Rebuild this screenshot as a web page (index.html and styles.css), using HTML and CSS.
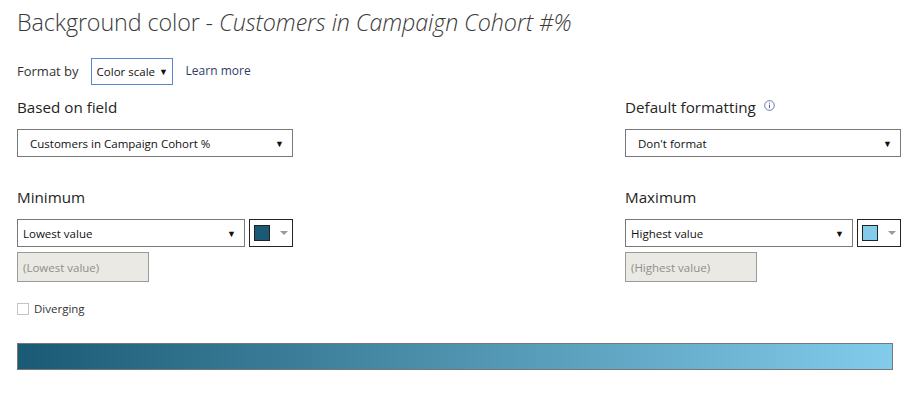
FILE: index.html
```html
<!DOCTYPE html>
<html>
<head>
<meta charset="utf-8">
<link rel="stylesheet" href="styles.css">
</head>
<body>
<div class="page">
  <h1 class="title">Background color - <em>Customers in Campaign Cohort #%</em></h1>

  <div class="format-row">
    <span class="format-label">Format by</span>
    <div class="format-select">Color scale <span class="tri">&#9660;</span></div>
    <span class="learn">Learn more</span>
  </div>

  <div class="grid">
    <div class="col">
      <div class="section-label">Based on field</div>
      <div class="dropdown wide"><span class="dd-text indent">Customers in Campaign Cohort %</span><span class="tri">&#9660;</span></div>
    </div>
    <div></div>
    <div class="col">
      <div class="section-label">Default formatting
        <svg class="info" width="11" height="11" viewBox="0 0 11 11"><circle cx="5.5" cy="5.5" r="4.8" fill="none" stroke="#4f6ea3" stroke-width="0.9"/><rect x="5" y="4.5" width="1" height="3.6" fill="#4f6ea3"/><rect x="5" y="2.7" width="1" height="1" fill="#4f6ea3"/></svg>
      </div>
      <div class="dropdown wide"><span class="dd-text indent">Don't format</span><span class="tri">&#9660;</span></div>
    </div>

    <div class="col mm">
      <div class="section-label">Minimum</div>
      <div class="pick-row">
        <div class="dropdown narrow"><span class="dd-text">Lowest value</span><span class="tri">&#9660;</span></div>
        <div class="swatch-btn"><span class="swatch dark"></span><span class="swatch-tri"></span></div>
      </div>
      <div class="placeholder">(Lowest value)</div>
      <label class="diverging"><span class="check"></span>Diverging</label>
    </div>
    <div></div>
    <div class="col mm">
      <div class="section-label">Maximum</div>
      <div class="pick-row">
        <div class="dropdown narrow"><span class="dd-text">Highest value</span><span class="tri">&#9660;</span></div>
        <div class="swatch-btn"><span class="swatch light"></span><span class="swatch-tri"></span></div>
      </div>
      <div class="placeholder">(Highest value)</div>
    </div>
  </div>

  <div class="gradient"></div>
</div>
</body>
</html>
```

FILE: styles.css
```css
html, body {
  margin: 0;
  padding: 0;
  background: #ffffff;
}
body {
  font-family: "Open Sans", "Noto Sans", sans-serif;
  color: #252423;
}
.page {
  width: 917px;
  box-sizing: border-box;
  padding: 6px 16px 0 17px;
}
.title {
  margin: 0;
  font-weight: 300;
  font-size: 23.3px;
  line-height: 32px;
  color: #3a3a3a;
  white-space: nowrap;
  letter-spacing: -0.1px;
}
.title em {
  font-style: italic;
}
.format-row {
  display: flex;
  align-items: center;
  margin-top: 19px;
  height: 27px;
  font-size: 12px;
}
.format-label {
  color: #333;
  margin-right: 12px;
  font-size: 13px;
}
.format-select {
  box-sizing: border-box;
  height: 27px;
  width: 82px;
  border: 1px solid #5b83cf;
  display: flex;
  align-items: center;
  padding-left: 5px;
  font-size: 11.5px;
  color: #111;
  margin-top: 2px;
}
.format-select .tri {
  margin-left: 4px;
  font-size: 9px;
}
.learn {
  margin-left: 13px;
  color: #2f3d6b;
  font-size: 12px;
}
.grid {
  display: grid;
  grid-template-columns: 276px 1fr 276px;
  margin-top: 12px;
}
.col {
  display: flex;
  flex-direction: column;
}
.section-label {
  font-size: 15.2px;
  height: 22px;
  line-height: 22px;
  color: #252423;
  display: flex;
  align-items: center;
}
.info {
  margin-left: 8px;
  margin-top: -3px;
}
.dropdown {
  box-sizing: border-box;
  height: 28px;
  border: 1px solid #7a7a7a;
  display: flex;
  align-items: center;
  justify-content: space-between;
  padding: 0 8px 0 5px;
  font-size: 11.5px;
  color: #111;
  margin-top: 11px;
}
.dropdown .tri {
  font-size: 9px;
  color: #111;
}
.dd-text.indent {
  padding-left: 7px;
}
.mm {
  margin-top: 29px;
}
.pick-row {
  display: flex;
  gap: 4px;
  margin-top: 11px;
}
.pick-row .dropdown {
  margin-top: 0;
  width: 228px;
}
.swatch-btn {
  box-sizing: border-box;
  width: 44px;
  height: 28px;
  border: 1px solid #252423;
  display: flex;
  align-items: center;
  padding-left: 4px;
}
.swatch {
  box-sizing: border-box;
  width: 16px;
  height: 16px;
  border: 1px solid #222;
}
.swatch.dark { background: #1b5a74; }
.swatch.light { background: #82cbea; }
.swatch-tri {
  margin-left: 10px;
  width: 0;
  height: 0;
  border-left: 4px solid transparent;
  border-right: 4px solid transparent;
  border-top: 4px solid #9a9a9a;
}
.placeholder {
  box-sizing: border-box;
  width: 132px;
  height: 30px;
  margin-top: 5px;
  background: #eae9e3;
  border: 1px solid #9a9a9a;
  display: flex;
  align-items: center;
  padding-left: 5px;
  font-size: 11.5px;
  color: #8f8f8f;
}
.diverging {
  display: flex;
  align-items: center;
  margin-top: 19px;
  font-size: 11.5px;
  color: #333;
}
.check {
  box-sizing: border-box;
  width: 12px;
  height: 12px;
  border: 1px solid #c4c4c4;
  margin-right: 5px;
}
.gradient {
  box-sizing: border-box;
  width: 876px;
  height: 27px;
  margin-top: 27px;
  border: 1px solid #777;
  background: linear-gradient(to right, #1b5a74, #82cbea);
}
```
